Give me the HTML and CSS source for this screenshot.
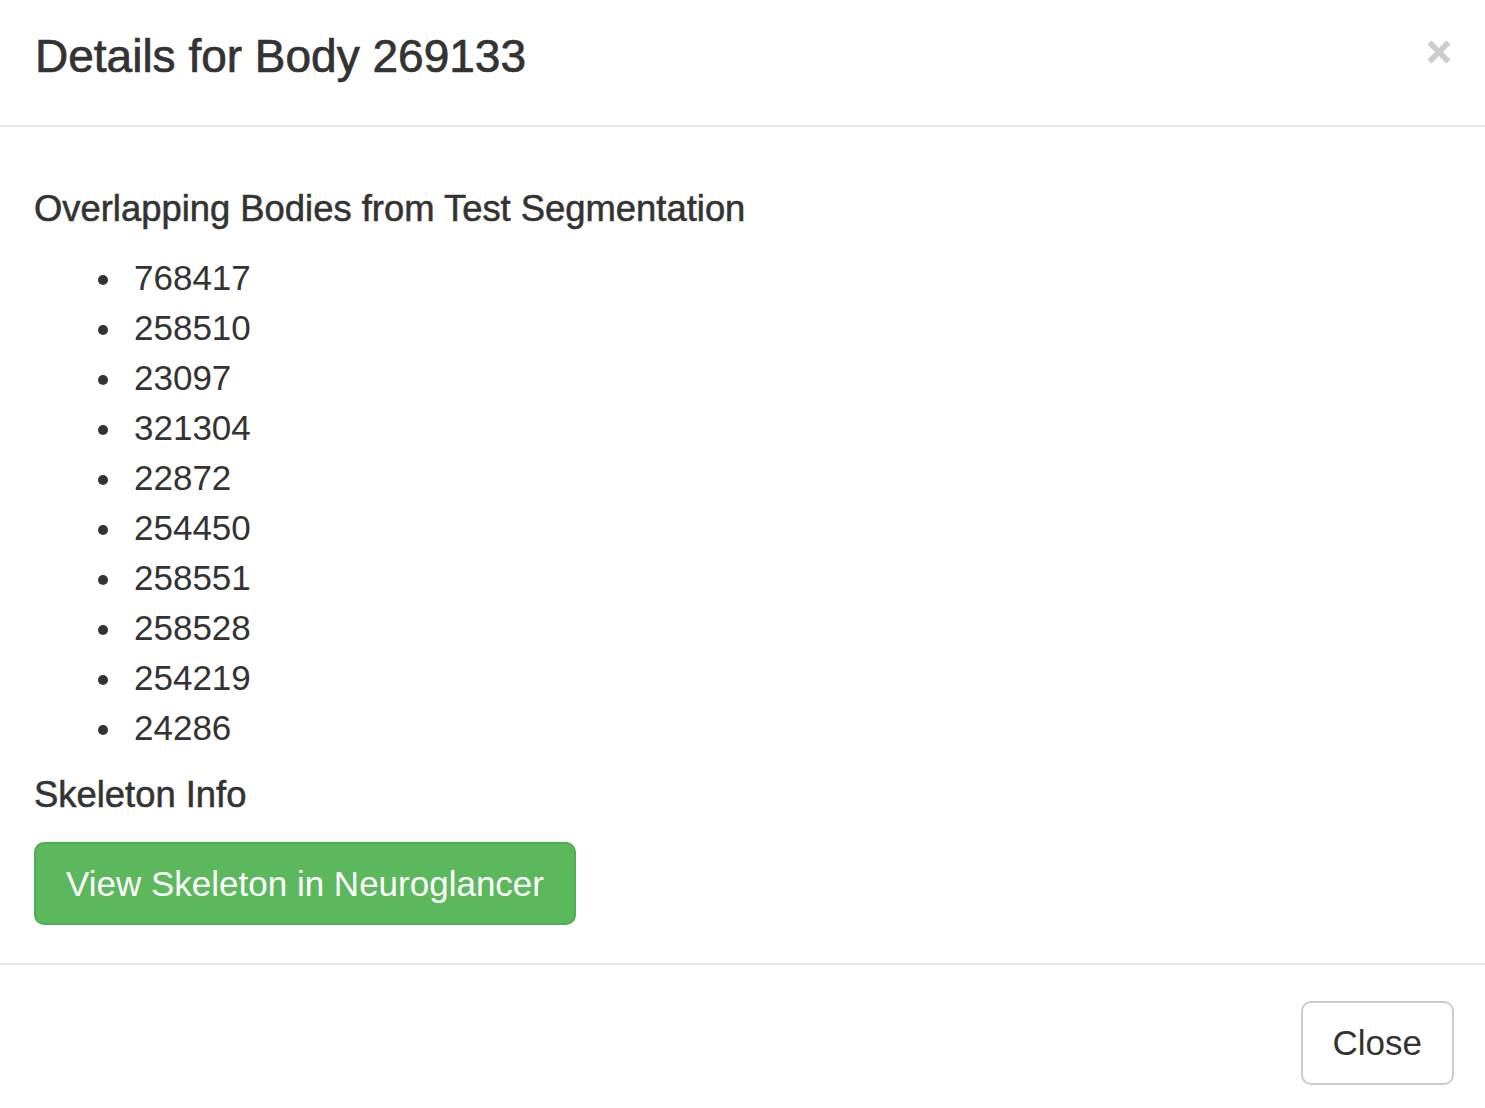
FILE: index.html
```html
<!DOCTYPE html>
<html>
<head>
<meta charset="utf-8">
<title>Details for Body 269133</title>
<link rel="stylesheet" href="styles.css">
</head>
<body>
<div class="modal">
  <div class="modal-header">
    <h4 class="modal-title">Details for Body 269133</h4>
    <button class="close" type="button" aria-label="Close">
      <svg width="24" height="24" viewBox="0 0 24 24"><path d="M2.5 2.5 L21.5 21.5 M21.5 2.5 L2.5 21.5" stroke="#cccccc" stroke-width="5.6" fill="none"/></svg>
    </button>
  </div>
  <div class="modal-body">
    <h4 class="section-title">Overlapping Bodies from Test Segmentation</h4>
    <ul class="body-list">
      <li>768417</li>
      <li>258510</li>
      <li>23097</li>
      <li>321304</li>
      <li>22872</li>
      <li>254450</li>
      <li>258551</li>
      <li>258528</li>
      <li>254219</li>
      <li>24286</li>
    </ul>
    <h4 class="section-title skeleton-title">Skeleton Info</h4>
    <button class="btn btn-success" type="button">View Skeleton in Neuroglancer</button>
  </div>
  <div class="modal-footer">
    <button class="btn btn-default" type="button">Close</button>
  </div>
</div>
</body>
</html>
```
FILE: styles.css
```css
html, body {
  margin: 0;
  padding: 0;
  background: #ffffff;
}
body {
  font-family: "Liberation Sans", Arial, Helvetica, sans-serif;
  font-size: 35px;
  line-height: 50px;
  color: #333333;
}
.modal {
  width: 1485px;
}
.modal-header {
  display: flex;
  justify-content: space-between;
  align-items: flex-start;
  padding: 24px 34px 37px 35px;
  border-bottom: 2px solid #e5e5e5;
}
.modal-title {
  margin: 0;
  font-size: 46px;
  line-height: 64px;
  font-weight: 400;
  -webkit-text-stroke: 0.7px #333333;
  color: #333333;
}
.close {
  margin: 16px 0 0 0;
  padding: 0;
  border: 0;
  background: transparent;
  width: 24px;
  height: 24px;
  display: block;
  cursor: pointer;
}
.close svg {
  display: block;
}
.modal-body {
  padding: 57px 35px 38px 34px;
}
.section-title {
  margin: 0;
  font-size: 36.4px;
  line-height: 50px;
  font-weight: 400;
  -webkit-text-stroke: 0.55px #333333;
  color: #333333;
}
.body-list {
  margin: 19px 0 17px 0;
  padding-left: 64px;
  list-style: none;
}
.body-list li {
  display: flex;
  align-items: center;
  line-height: 50px;
}
.body-list li::before {
  content: "";
  width: 10px;
  height: 10px;
  border-radius: 50%;
  background: #333333;
  margin: 4px 26px 0 0;
  flex: none;
}
.skeleton-title {
  margin-bottom: 22px;
}
.btn {
  display: inline-block;
  font-family: "Liberation Sans", Arial, Helvetica, sans-serif;
  font-size: 35px;
  line-height: 49px;
  padding: 15px 30px;
  border: 2px solid transparent;
  border-radius: 10px;
  cursor: pointer;
}
.btn-success {
  background: #5cb85c;
  border-color: #4cae4c;
  color: #ffffff;
}
.btn-default {
  background: #ffffff;
  border-color: #cccccc;
  color: #333333;
  line-height: 50px;
}
.modal-footer {
  display: flex;
  justify-content: flex-end;
  padding: 36px 31px 24px 35px;
  border-top: 2px solid #e5e5e5;
}
```
